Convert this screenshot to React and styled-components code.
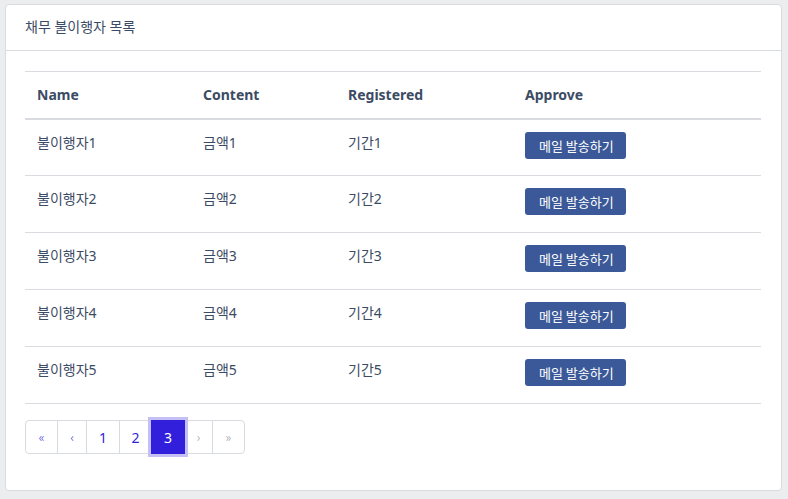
import React from 'react';
import styled, { createGlobalStyle } from 'styled-components';

const GlobalStyle = createGlobalStyle`
  body {
    margin: 0;
    background: #ebedef;
    font-family: "Noto Sans", "Noto Sans CJK KR", sans-serif;
    color: #3c4b64;
  }
  * {
    box-sizing: border-box;
  }
`

export const Page = styled.div`
  padding: 4px 6px 9px 5px;
`
export const Card = styled.div`
  background: #fff;
  border: 1px solid #d8dbe0;
  border-radius: 4px;
`
export const CardHeader = styled.div`
  padding: 12px 19px 12px;
  height: 46px;
  line-height: 20px;
  font-size: 14px;
  color: #3c4b64;
  border-bottom: 1px solid #d8dbe0;
`
export const CardBody = styled.div`
  padding: 20px 20px 20px 19px;
`
export const Table = styled.table`
  width: 100%;
  border-collapse: collapse;
  table-layout: fixed;
  margin-bottom: 16px;
  font-size: 14px;
`
export const Th = styled.th`
  width: ${p => (p.w ? `${p.w}px` : 'auto')};
  text-align: left;
  font-weight: 700;
  color: #3c4b64;
  padding: 12px;
  height: 47px;
  line-height: 21px;
  border-top: 1px solid #d8dbe0;
  border-bottom: 2px solid #d8dbe0;
`
export const Td = styled.td`
  padding: 12px;
  height: 57px;
  vertical-align: top;
  line-height: 21px;
  color: #3c4b64;
  border-bottom: 1px solid #d8dbe0;
`
export const MailButton = styled.button`
  display: block;
  height: 27px;
  padding: 0 12px 0 14px;
  background: #3b5998;
  color: #fff;
  border: none;
  border-radius: 3px;
  font-family: "Noto Sans CJK KR", sans-serif;
  font-size: 13px;
  line-height: 27px;
  cursor: pointer;
`
export const Pagination = styled.ul`
  display: flex;
  list-style: none;
  margin: 0 0 16px 0;
  padding: 0;
`
export const PageItem = styled.li`
  width: ${p => p.w}px;
  height: 34px;
  margin-left: -1px;
  display: flex;
  align-items: center;
  justify-content: center;
  font-size: ${p => (p.arrow ? 12 : 14)}px;
  font-weight: ${p => (p.arrow ? 300 : 400)};
  color: ${p => (p.active ? '#fff' : p.disabled ? '#8a93a2' : '#321fdb')};
  background: ${p => (p.active ? '#321fdb' : '#fff')};
  border: 1px solid ${p => (p.active ? '#321fdb' : '#d8dbe0')};
  box-shadow: ${p => (p.active ? '0 0 0 3px #c4bff5' : 'none')};
  position: relative;
  z-index: ${p => (p.active ? 2 : 1)};
  &:first-child {
    margin-left: 0;
    border-radius: 4px 0 0 4px;
  }
  &:last-child {
    border-radius: 0 4px 4px 0;
  }
`

const rows = [1, 2, 3, 4, 5]

const pages = [
  { label: '«', w: 33, arrow: true },
  { label: '‹', w: 30, arrow: true },
  { label: '1', w: 34 },
  { label: '2', w: 33 },
  { label: '3', w: 34, active: true },
  { label: '›', w: 29, arrow: true, disabled: true },
  { label: '»', w: 33, arrow: true, disabled: true },
]

export default function App() {
  return (
    <>
      <GlobalStyle />
      <Page>
        <Card>
          <CardHeader>채무 불이행자 목록</CardHeader>
          <CardBody>
            <Table>
              <thead>
                <tr>
                  <Th w={166}>Name</Th>
                  <Th w={145}>Content</Th>
                  <Th w={177}>Registered</Th>
                  <Th>Approve</Th>
                </tr>
              </thead>
              <tbody>
                {rows.map(n => (
                  <tr key={n}>
                    <Td>불이행자{n}</Td>
                    <Td>금액{n}</Td>
                    <Td>기간{n}</Td>
                    <Td>
                      <MailButton>메일 발송하기</MailButton>
                    </Td>
                  </tr>
                ))}
              </tbody>
            </Table>
            <Pagination>
              {pages.map(p => (
                <PageItem key={p.label} w={p.w} arrow={p.arrow} active={p.active} disabled={p.disabled}>
                  {p.label}
                </PageItem>
              ))}
            </Pagination>
          </CardBody>
        </Card>
      </Page>
    </>
  )
}
